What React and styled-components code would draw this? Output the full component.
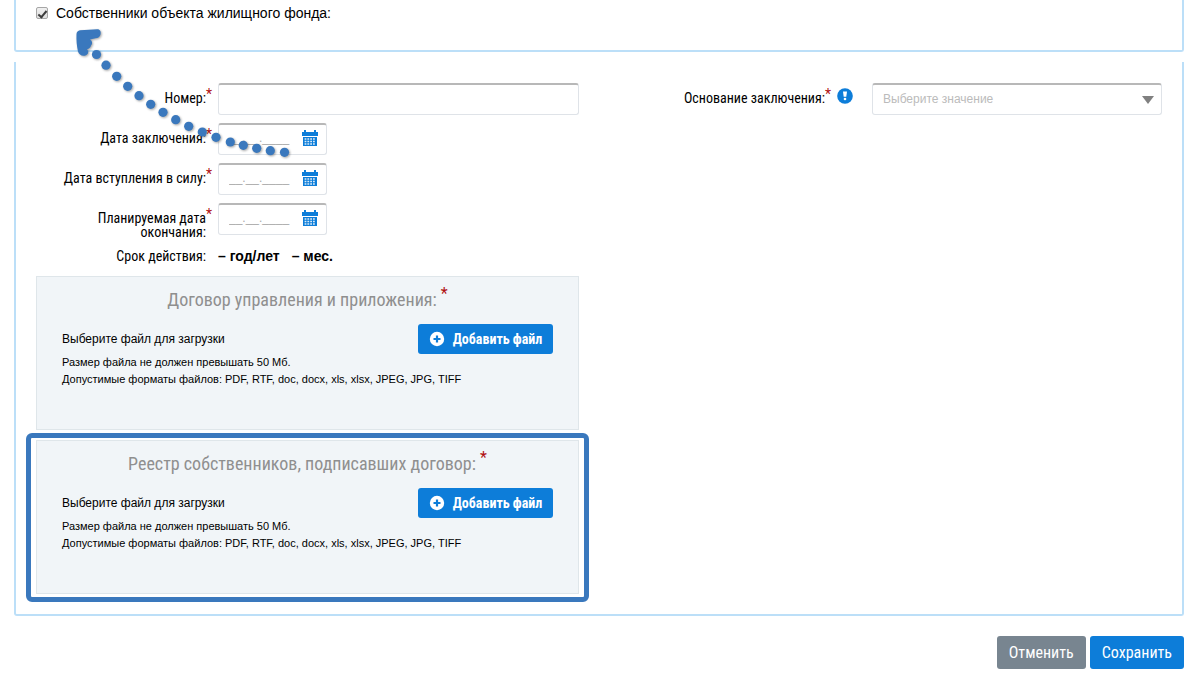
import { useState } from 'react';
import styled, { createGlobalStyle, css } from 'styled-components';

const condensed = css`
  font-family: 'Roboto Condensed', 'Liberation Sans Narrow', 'Arial Narrow', 'Liberation Sans', sans-serif;
`;

const GlobalStyle = createGlobalStyle`
  *,
  *::before,
  *::after {
    box-sizing: border-box;
  }

  body {
    margin: 0;
    background: #fff;
    color: #000;
    font-family: 'Liberation Sans', Arial, sans-serif;
    font-size: 14px;
  }
`;

const Page = styled.form`
  position: relative;
  padding: 0 15px 14px 14px;
`;

const Panel = styled.section`
  border: 2px solid #bcdff8;
  border-top: 0;
  border-radius: 0 0 3px 3px;
`;

const OwnersPanel = styled(Panel)`
  height: 52px;
  padding: 5px 20px;
`;

const CheckLabel = styled.label`
  display: flex;
  align-items: center;
  gap: 8px;
  line-height: 16px;
`;

const Checkbox = styled.input`
  appearance: none;
  display: grid;
  place-items: center;
  width: 12px;
  height: 12px;
  margin: 0;
  border: 1px solid #a6a6a6;
  border-radius: 2px;
  background: linear-gradient(#f0f0f0, #dedede);

  &:checked::after {
    content: '';
    width: 5px;
    height: 9px;
    border: solid #3c3c3c;
    border-width: 0 2px 2px 0;
    transform: rotate(40deg);
  }
`;

const ContractPanel = styled(Panel)`
  display: grid;
  grid-template-columns: 1fr 1fr;
  gap: 40px;
  margin-top: 10px;
  padding: 21px 20px 12px;
`;

const Column = styled.div`
  min-width: 0;
`;

const Row = styled.div`
  display: grid;
  grid-template-columns: ${({ $labelWidth }) => $labelWidth || 182}px 1fr;
  align-items: start;
  margin-bottom: 8px;
`;

const LabelCell = styled.div`
  ${condensed}
  display: flex;
  justify-content: flex-end;
  padding-top: 8px;
  font-size: 14px;
  line-height: 14px;
  text-align: right;
`;

const Star = styled.span`
  width: 12px;
  height: 14px;
  margin-top: -4px;
  color: #b01010;
  text-align: left;
`;

const fieldBox = css`
  height: 32px;
  border: 1px solid #dfe3e8;
  border-width: 2px 1px 1px;
  border-top-color: #b8b8b8;
  border-radius: 3px;
  background: #fff;
`;

const TextInput = styled.input`
  ${fieldBox}
  width: 100%;
  padding: 0 10px;
`;

const DateBox = styled.div`
  ${fieldBox}
  display: flex;
  align-items: center;
  justify-content: space-between;
  width: 109px;
  padding: 0 8px 3px 10px;
`;

const DateInput = styled.input`
  width: 64px;
  padding: 0;
  border: 0;
  outline: 0;
  background: none;
  font: 12px 'Liberation Sans', Arial, sans-serif;

  &::placeholder {
    color: #aaa;
    opacity: 1;
  }
`;

const IconButton = styled.button`
  display: flex;
  padding: 0;
  border: 0;
  background: none;
  color: #0d7dd9;
  cursor: pointer;
`;

const InfoIcon = styled.svg`
  width: 16px;
  height: 16px;
  margin: -3px 19px 0 0;
`;

const SelectBox = styled.div`
  ${fieldBox}
  display: flex;
  align-items: center;
  padding-right: 7px;
`;

const Select = styled.select`
  appearance: none;
  flex: 1;
  min-width: 0;
  padding: 0 10px 2px;
  border: 0;
  outline: 0;
  background: none;
  color: #bbb;
  font: 12px 'Liberation Sans', Arial, sans-serif;
`;

const Term = styled.div`
  display: flex;
  gap: 12px;
  font-weight: bold;
  line-height: 16px;
`;

const TermRow = styled(Row)`
  align-items: center;
  margin: 0 0 12px;
  padding-top: 1px;

  ${LabelCell} {
    padding-top: 0;
  }
`;

const UploadCard = styled.section`
  height: 154px;
  padding: 12px 25px;
  border: 1px solid #dfe6ea;
  background: #f1f5f8;
`;

const UploadTitle = styled.h3`
  ${condensed}
  display: flex;
  justify-content: center;
  gap: 4px;
  margin: 0 0 13px;
  color: #8f8f8f;
  font-size: 18px;
  font-weight: normal;
  line-height: 22px;

  ${Star} {
    width: 7px;
    margin-top: -6px;
    font-size: 16px;
  }
`;

const UploadRow = styled.div`
  display: flex;
  align-items: center;
  justify-content: space-between;
  height: 30px;
  font-size: 12px;
`;

const Hint = styled.p`
  margin: 0;
  font-size: 11px;
  line-height: 17px;
`;

const Button = styled.button`
  ${condensed}
  display: flex;
  align-items: center;
  justify-content: center;
  gap: 8px;
  height: 33px;
  padding: 0 12px;
  border: 0;
  border-radius: 3px;
  background: ${({ $muted }) => ($muted ? '#788590' : '#0d7dd9')};
  color: #fff;
  font-size: 16px;
  white-space: nowrap;
  cursor: pointer;
`;

const AddButton = styled(Button)`
  width: 135px;
  height: 30px;
  padding: 0 11px;
  font-size: 14px;
  font-weight: bold;

  svg {
    flex: none;
  }
`;

const Highlight = styled.div`
  margin: 3px -10px 0;
  padding: 2px 5px 3px;
  border: 5px solid #3a78bd;
  border-radius: 6px;
`;

const Actions = styled.div`
  display: flex;
  justify-content: flex-end;
  gap: 4px;
  margin-top: 20px;
`;

const Pointer = styled.svg`
  position: absolute;
  top: 0;
  left: 0;
  pointer-events: none;
  filter: drop-shadow(1px 1px 1px rgba(0, 0, 0, 0.35));
`;

const dots = [
  [96.5, 54.5],
  [106, 65.2],
  [116.7, 76.3],
  [127.7, 86.3],
  [139, 95.7],
  [150.7, 104.3],
  [163, 112.3],
  [175.7, 119.7],
  [188.7, 126.3],
  [202.3, 132],
  [216, 137.3],
  [230.3, 142],
  [243.3, 145.3],
  [256.7, 148.3],
  [270.3, 150.7],
  [284.5, 152.3],
];

const CalendarIcon = () => (
  <svg width="16" height="16" viewBox="0 0 16 16" aria-hidden="true">
    <path fill="currentColor" d="M0 2h2V0h2v2h8V0h2v2h2v4H0zM1 7h14v9H1z" />
    <path
      stroke="#fff"
      strokeOpacity="0.85"
      strokeWidth="1.400"
      strokeDasharray="1.800 1"
      d="M2.600 9h11M2.600 11.500h11M2.600 14h11"
    />
  </svg>
);

const PlusIcon = () => (
  <svg width="16" height="16" viewBox="0 0 16 16" aria-hidden="true">
    <circle cx="8" cy="8" r="7.2" fill="#fff" />
    <path d="M8 4.5v7M4.5 8h7" stroke="#0d7dd9" strokeWidth="2.2" />
  </svg>
);

const DateField = ({ id, label }) => (
  <Row>
    <LabelCell>
      <label htmlFor={id}>{label}</label>
      <Star>*</Star>
    </LabelCell>
    <DateBox>
      <DateInput id={id} placeholder="__.__.____" />
      <IconButton type="button" aria-label="Календарь">
        <CalendarIcon />
      </IconButton>
    </DateBox>
  </Row>
);

const Upload = ({ title }) => (
  <UploadCard>
    <UploadTitle>
      {title}
      <Star>*</Star>
    </UploadTitle>
    <UploadRow>
      Выберите файл для загрузки
      <AddButton type="button">
        <PlusIcon />
        Добавить файл
      </AddButton>
    </UploadRow>
    <Hint>Размер файла не должен превышать 50 Мб.</Hint>
    <Hint>Допустимые форматы файлов: PDF, RTF, doc, docx, xls, xlsx, JPEG, JPG, TIFF</Hint>
  </UploadCard>
);

const App = () => {
  const [owners, setOwners] = useState(true);

  return (
    <>
      <GlobalStyle />
      <Page onSubmit={(e) => e.preventDefault()}>
        <OwnersPanel>
          <CheckLabel>
            <Checkbox type="checkbox" checked={owners} onChange={(e) => setOwners(e.target.checked)} />
            Собственники объекта жилищного фонда:
          </CheckLabel>
        </OwnersPanel>

        <ContractPanel>
          <Column>
            <Row>
              <LabelCell>
                <label htmlFor="number">Номер:</label>
                <Star>*</Star>
              </LabelCell>
              <TextInput id="number" />
            </Row>
            <DateField id="signed" label="Дата заключения:" />
            <DateField id="effective" label="Дата вступления в силу:" />
            <DateField
              id="end"
              label={
                <>
                  Планируемая дата
                  <br />
                  окончания:
                </>
              }
            />
            <TermRow>
              <LabelCell>
                Срок действия:
                <Star />
              </LabelCell>
              <Term>
                <span>– год/лет</span>
                <span>– мес.</span>
              </Term>
            </TermRow>
            <Upload title="Договор управления и приложения:" />
            <Highlight>
              <Upload title="Реестр собственников, подписавших договор:" />
            </Highlight>
          </Column>

          <Column>
            <Row $labelWidth={253}>
              <LabelCell>
                <label htmlFor="basis">Основание заключения:</label>
                <Star>*</Star>
                <InfoIcon viewBox="0 0 16 16" aria-hidden="true">
                  <circle cx="8" cy="8" r="7.8" fill="#0d7dd9" />
                  <path d="M6 3.500h4l-.7 5.300H6.700z" fill="#fff" />
                  <circle cx="8" cy="11" r="1.300" fill="#fff" />
                </InfoIcon>
              </LabelCell>
              <SelectBox>
                <Select id="basis">
                  <option>Выберите значение</option>
                </Select>
                <svg width="12" height="8" aria-hidden="true">
                  <path d="M0 0h12L6 8z" fill="#808080" />
                </svg>
              </SelectBox>
            </Row>
          </Column>
        </ContractPanel>

        <Actions>
          <Button type="button" $muted>
            Отменить
          </Button>
          <Button type="submit">Сохранить</Button>
        </Actions>

        <Pointer width="300" height="170" fill="#3a78bd" aria-hidden="true">
          <path d="M80 30.200C86 29.500 92 29.800 97 29.200C100 29 101.300 31.500 100.500 34.500C100 37 98 38 95.500 38.300L90 39.500C92.500 41 92.700 44 91 45.500C90.500 48 89 48.500 87 49.500C89 51.500 88.500 54 86 55.200C82.500 56.700 79 55 78 51.500C76.800 46 76.200 40 76.500 34C76.700 31.800 78 30.500 80 30.200z" />
          {dots.map(([x, y]) => (
            <circle key={x} cx={x} cy={y} r="4.6" />
          ))}
        </Pointer>
      </Page>
    </>
  );
};

export default App;
